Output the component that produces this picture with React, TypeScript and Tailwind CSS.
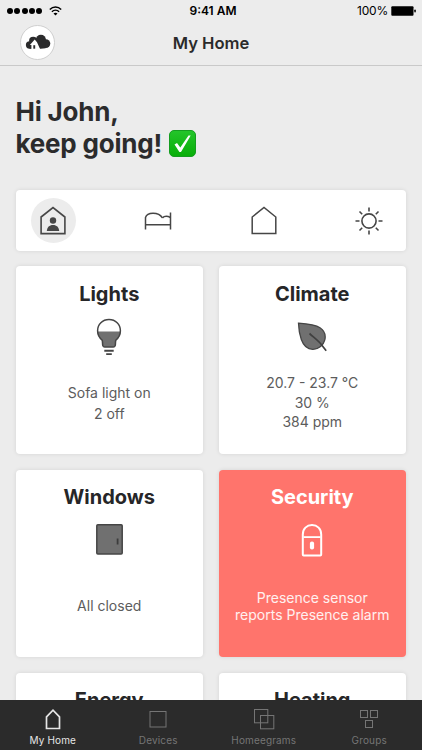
import type { ReactNode } from "react";

type IconProps = { className?: string };

const CloudLogo = () => (
    <svg className="w-[26px] h-4 shrink-0" viewBox="0 0 26 16" fill="none">
        <g fill="#2b2b2c">
            <circle cx="4.6" cy="11" r="3.7" />
            <circle cx="8.2" cy="6.8" r="4.1" />
            <circle cx="15.9" cy="5.8" r="5.1" />
            <circle cx="20.9" cy="9.6" r="4.4" />
            <path d="M4.600 8h16v6.200l-5 .6-11-.1Z" />
        </g>
        {/* House cut out of the cloud */}
        <path d="M9.700 5.600 4.900 11h1.500v4.500h8.900L12 8.300Z" fill="white" />
        <path d="M8.300 11.200h1.900v3.500H8.300Z" fill="#2b2b2c" />
    </svg>
);

const HousePersonIcon = () => (
    <svg className="w-[26px] h-[29px]" viewBox="0 0 26 29" fill="none">
        <path d="M1.100 11 13 1.500 24.900 11v16.600H1.100Z" stroke="#464646" strokeWidth="1.600" />
        <circle cx="13" cy="14.500" r="3.200" fill="#464646" />
        <path d="M6.800 25c.3-3.800 2.500-6 6.200-6s5.900 2.200 6.200 6Z" fill="#464646" />
    </svg>
);

const BedIcon = () => (
    <svg className="w-7 h-5" viewBox="0 0 28 20" fill="none" stroke="#464646" strokeWidth="1.500">
        <path d="M1.500 18.500V6.500C2.400 3.500 5 2.300 9 2.300c4.300 0 7.500 1.400 9.400 4.600M26.500 1.500v17M1.500 13.800h25" />
        <path d="M18.400 6.900c1.700-1.700 4.500-2.200 8.100-.4" />
    </svg>
);

const HouseIcon = () => (
    <svg className="w-[26px] h-[29px]" viewBox="0 0 26 29" fill="none">
        <path d="M1.200 11 13 1.500 24.800 11v16.600H1.200Z" stroke="#464646" strokeWidth="1.500" />
    </svg>
);

const SunIcon = () => (
    <svg className="w-7 h-7" viewBox="0 0 28 28" fill="none" stroke="#464646" strokeWidth="1.600">
        <circle cx="14" cy="14" r="7.100" />
        <path d="M14 .5v4M14 23.500v4M.5 14h4M23.500 14h4M4.500 4.500l2.700 2.700M20.800 20.800l2.700 2.700M4.500 23.500l2.700-2.700M20.800 7.200l2.700-2.700" />
    </svg>
);

const BulbIcon = () => (
    <svg className="w-[26px] h-[38px]" viewBox="0 0 26 38" fill="none">
        <path
            d="M1.500 13.500h23c-.2 4.200-2 6.500-4.300 8.600-.5 1.800-.4 3.800-.8 5.400-.3 1-1 1.500-2 1.500H8.600c-1 0-1.700-.5-2-1.500-.4-1.600-.3-3.600-.8-5.400-2.300-2.100-4.100-4.400-4.300-8.600Z"
            fill="#707070"
        />
        <path
            d="M13 1.500c-6.500 0-11.400 4.900-11.400 11.200 0 4 1.600 6.900 4.600 9.500.6 2 .1 3.700.6 5.400.3 1 .9 1.500 1.900 1.500h8.600c1 0 1.600-.5 1.900-1.500.5-1.700 0-3.400.6-5.400 3-2.600 4.600-5.500 4.600-9.500C24.400 6.400 19.500 1.500 13 1.500Z"
            stroke="#454545"
            strokeWidth="1.500"
        />
        <path d="M8.300 32.800h9.400M10.200 36.100h5.600" stroke="#454545" strokeWidth="1.900" />
    </svg>
);

const LeafIcon = () => (
    <svg className="w-[30px] h-[30px]" viewBox="0 0 30 30" fill="none">
        <path
            d="M1.500 1.200C9.500 1.800 18 2.500 23 5.700c4.500 3 5.900 7.600 4.800 12.200-1.300 5.400-6 9.300-11.800 9.400C9.500 27.500 6.300 23 4.300 17.500 2.400 12 1.700 7 1.500 1.200Z"
            fill="#707070"
            stroke="#454545"
            strokeWidth="1.300"
        />
        <path d="M12.500 11.500c5 4.500 10.500 8.500 12 11.300l4.700 5.900" stroke="#404040" strokeWidth="1.700" />
    </svg>
);

const WindowIcon = () => (
    <svg className="w-[27px] h-[31px]" viewBox="0 0 27 31" fill="none">
        <rect x=".8" y=".8" width="25.400" height="29.200" rx="1" fill="#707070" stroke="#454545" strokeWidth="1.500" />
        <path d="M21.600 14.500v6" stroke="#3c3c3c" strokeWidth="1.800" />
    </svg>
);

const LockIcon = () => (
    <svg className="w-[22px] h-[34px]" viewBox="0 0 22 34" fill="none">
        <path
            d="M1.800 31.500V11.500C1.800 5.800 5.700 2 11 2s9.200 3.800 9.200 9.500v20c0 .6-.3.9-.9.9H2.700c-.6 0-.9-.3-.9-.9Z"
            stroke="white"
            strokeWidth="2"
        />
        <path d="M2.500 14.100h17" stroke="white" strokeWidth="1.800" />
        <rect x="8.900" y="18.500" width="4.200" height="8" rx="2" fill="white" />
    </svg>
);

const TabHomeIcon = ({ className }: IconProps) => (
    <svg className={className} viewBox="0 0 22 22" fill="none" stroke="currentColor" strokeWidth="1.700">
        <path d="M4.500 20.500V8.800L11 2.200l6.500 6.600v11.700Z" />
    </svg>
);

const TabDevicesIcon = ({ className }: IconProps) => (
    <svg className={className} viewBox="0 0 22 22" fill="none" stroke="currentColor">
        <rect x="3" y="3.500" width="16" height="15.500" />
    </svg>
);

const TabHomeegramsIcon = ({ className }: IconProps) => (
    <svg className={className} viewBox="0 0 22 22" fill="none" stroke="currentColor">
        <rect x="1.500" y="1.500" width="13.300" height="13.300" />
        <rect x="7.500" y="7.500" width="13.300" height="13.300" />
    </svg>
);

const TabGroupsIcon = ({ className }: IconProps) => (
    <svg className={className} viewBox="0 0 22 22" fill="none" stroke="currentColor">
        <rect x="2.500" y="2.500" width="7" height="7" />
        <rect x="12.500" y="2.500" width="7" height="7" />
        <rect x="7.500" y="12.500" width="7" height="7" />
    </svg>
);

type CardProps = {
    title: string;
    icon?: ReactNode;
    lines?: string[];
    lineClass?: string;
    alert?: boolean;
};

const Card = ({ title, icon, lines = [], lineClass = "", alert }: CardProps) => (
    <div
        className={`flex flex-col items-center h-[187.8px] pt-[15.3px] rounded-[4px] shadow-[0_0_4px_rgba(0,0,0,0.10)] ${
            alert ? "bg-[#ff746c] text-white" : "bg-white text-[#262628]"
        }`}
    >
        <h2 className="h-6 text-[20px] leading-6 font-bold whitespace-nowrap">{title}</h2>
        <div className="flex items-center justify-center h-[62px] shrink-0">{icon}</div>
        <div
            className={`flex flex-col items-center justify-center h-[70px] text-[14px] whitespace-nowrap ${lineClass} ${
                alert ? "text-white/90" : "text-[#5c5c5c]"
            }`}
        >
            {lines.map((line) => (
                <p key={line}>{line}</p>
            ))}
        </div>
    </div>
);

const tabs = [
    { label: "My Home", icon: TabHomeIcon, active: true },
    { label: "Devices", icon: TabDevicesIcon },
    { label: "Homeegrams", icon: TabHomeegramsIcon },
    { label: "Groups", icon: TabGroupsIcon },
];

const App = () => {
    return (
        <div className="flex flex-col w-[422px] h-[750px] overflow-hidden bg-[#ececec] font-['Inter','Liberation_Sans',sans-serif]">
            {/* Status bar */}
            <div className="grid grid-cols-3 items-center h-[22px] pl-[7px] pr-[6px] text-black shrink-0">
                <div className="flex items-center">
                    <div className="flex gap-[1.3px]">
                        {[0, 1, 2, 3, 4].map((i) => (
                            <span key={i} className="size-[6px] rounded-full bg-black" />
                        ))}
                    </div>
                    <svg className="ml-[7px] w-[13px] h-[10px]" viewBox="0 0 13 10" fill="none" stroke="black" strokeWidth="1.500">
                        <path d="M.8 3.500c3.300-3.300 8.100-3.300 11.400 0M2.900 5.700c2.100-2 5.100-2 7.200 0" />
                        <path d="M4.500 7.600c1.200-1 2.800-1 4 0l-2 2Z" fill="black" stroke="none" />
                    </svg>
                </div>
                <span className="pl-[3px] text-center text-[12px] font-semibold">9:41 AM</span>
                <div className="flex items-center justify-end gap-[3px]">
                    <span className="text-[12px] tracking-[-0.2px]">100%</span>
                    <svg className="w-[25px] h-[10px]" viewBox="0 0 25 10">
                        <rect x=".3" y=".2" width="22.200" height="9.600" rx="1" />
                        <rect x="23.300" y="3.500" width="1.500" height="3" rx=".7" />
                    </svg>
                </div>
            </div>

            {/* Header */}
            <header className="grid grid-cols-[60px_1fr_60px] items-center h-11 border-b border-[#c9c9c9] shrink-0">
                <div className="flex items-center justify-center size-[35px] ml-5 mb-[3px] rounded-full bg-white border border-[#cfcfcf]">
                    <CloudLogo />
                </div>
                <h1 className="pb-px text-center text-[16.600px] leading-5 font-semibold text-[#2a2a2a]">My Home</h1>
            </header>

            <main className="flex-1 min-h-0 overflow-hidden px-[15.5px] pt-[30px]">
                <div className="text-[26px] leading-8 font-bold tracking-[-0.2px] text-[#2b2b2c]">
                    <p>Hi John,</p>
                    <div className="flex items-center">
                        <p>keep going!</p>
                        <svg className="ml-[7px] mb-[2px] size-[27px]" viewBox="0 0 27 27">
                            <defs>
                                <linearGradient id="check" x2="0" y2="1">
                                    <stop stopColor="#24c52b" />
                                    <stop offset="1" stopColor="#08ae08" />
                                </linearGradient>
                            </defs>
                            <rect x=".5" y=".5" width="26" height="26" rx="4.500" fill="url(#check)" stroke="#159d20" />
                            <path d="M5.500 14.500 8 13l3.300 4.600L19.500 5.500h2.200L12 22h-1.600Z" fill="white" />
                        </svg>
                    </div>
                </div>

                {/* Modes */}
                <div className="flex items-center justify-between w-[390.900px] h-[61px] mt-[30px] px-[15px] bg-white rounded-[4px] shadow-[0_0_4px_rgba(0,0,0,0.10)]">
                    <div className="flex items-center justify-center size-[45px] rounded-full bg-[#ececec]">
                        <HousePersonIcon />
                    </div>
                    <div className="flex items-center justify-center size-[45px]">
                        <BedIcon />
                    </div>
                    <div className="flex items-center justify-center size-[45px]">
                        <HouseIcon />
                    </div>
                    <div className="flex items-center justify-center size-[45px]">
                        <SunIcon />
                    </div>
                </div>

                <div className="grid grid-cols-[187.500px_187.500px] gap-x-[15.500px] gap-y-[15.550px] mt-[15.300px]">
                    <Card title="Lights" icon={<BulbIcon />} lines={["Sofa light on", "2 off"]} lineClass="leading-[21px]" />
                    <Card
                        title="Climate"
                        icon={<LeafIcon />}
                        lines={["20.7 - 23.7 °C", "30 %", "384 ppm"]}
                        lineClass="leading-[19.500px]"
                    />
                    <Card title="Windows" icon={<WindowIcon />} lines={["All closed"]} lineClass="leading-[17px]" />
                    <Card
                        title="Security"
                        icon={<LockIcon />}
                        lines={["Presence sensor", "reports Presence alarm"]}
                        lineClass="leading-[17px]"
                        alert
                    />
                    <Card title="Energy" />
                    <Card title="Heating" />
                </div>
            </main>

            {/* Tab bar */}
            <nav className="grid grid-cols-4 h-[50px] bg-[#2b2b2b] shrink-0">
                {tabs.map(({ label, icon: Icon, active }) => (
                    <div
                        key={label}
                        className={`flex flex-col items-center pt-2 ${active ? "text-[#e6e6e6]" : "text-[#757575]"}`}
                    >
                        <Icon className="size-[22px]" />
                        <span className="mt-[4px] text-[10px] leading-[13px] tracking-[0.15px]">{label}</span>
                    </div>
                ))}
            </nav>
        </div>
    );
};

export default App;
